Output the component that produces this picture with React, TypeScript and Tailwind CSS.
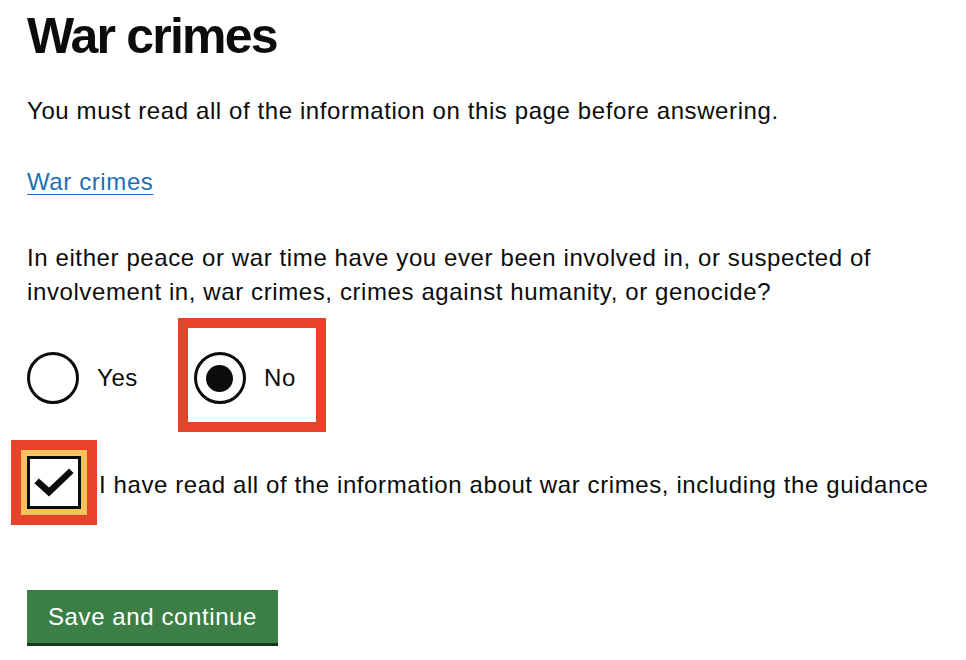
import React, { useState } from 'react';

const App: React.FC = () => {
  const [answer, setAnswer] = useState<'yes' | 'no'>('no');
  const [confirmed, setConfirmed] = useState(true);

  return (
    <div className="min-h-screen bg-white pl-[27px] pt-[6px] text-[#0b0c0c] font-['Liberation_Sans',Arial,sans-serif] tracking-[0.6px]">
      <h1 className="text-[50px] leading-[60px] font-bold tracking-[-1.8px]">War crimes</h1>

      <p className="mt-[28px] text-[24px] leading-[34px]">
        You must read all of the information on this page before answering.
      </p>

      <p className="mt-[37px] text-[24px] leading-[34px]">
        <a href="#" className="text-[#1d70b8] underline decoration-1 underline-offset-[4px]">War crimes</a>
      </p>

      <fieldset className="mt-[42px]">
        <legend className="text-[24px] leading-[34px] max-w-[880px]">
          In either peace or war time have you ever been involved in, or suspected of involvement in, war crimes, crimes against humanity, or genocide?
        </legend>

        <div className="mt-[9px] flex items-start">
          <label className="mt-[34px] flex items-center cursor-pointer" onClick={() => setAnswer('yes')}>
            <span className="w-[52px] h-[52px] rounded-full border-[3px] border-[#0b0c0c] flex items-center justify-center">
              {answer === 'yes' && <span className="w-[27px] h-[27px] rounded-full bg-[#0b0c0c]" />}
            </span>
            <span className="ml-[18px] text-[24px] leading-[34px]">Yes</span>
          </label>

          {/* highlighted answer */}
          <div className="ml-[40px] border-[10px] border-[#e6432a] pt-[24px] pb-[18px] pl-[6px] pr-[20px]">
            <label className="flex items-center cursor-pointer" onClick={() => setAnswer('no')}>
              <span className="w-[52px] h-[52px] rounded-full border-[3px] border-[#0b0c0c] flex items-center justify-center">
                {answer === 'no' && <span className="w-[27px] h-[27px] rounded-full bg-[#0b0c0c]" />}
              </span>
              <span className="ml-[18px] text-[24px] leading-[34px]">No</span>
            </label>
          </div>
        </div>
      </fieldset>

      <div className="mt-[8px] -ml-4 flex items-center">
        <button
          type="button"
          onClick={() => setConfirmed(!confirmed)}
          className="border-[10px] border-[#e6432a]"
        >
          <span className="block border-[6px] border-[#f7c25c]">
            <span className="block w-[54px] h-[53px] border-[3px] border-[#0b0c0c] bg-white">
              {confirmed && (
                <svg width="48" height="47" viewBox="0 0 48 47">
                  <polyline points="9,24 19,33 39,14" fill="none" stroke="#0b0c0c" strokeWidth="6.5" strokeLinecap="square" />
                </svg>
              )}
            </span>
          </span>
        </button>
        <span className="ml-[2px] pt-[5px] text-[24px] leading-[34px]">
          I have read all of the information about war crimes, including the guidance
        </span>
      </div>

      <button
        type="button"
        className="mt-[65px] h-[53px] pl-[21px] pr-[21px] bg-[#3b7f47] text-white text-[24px] leading-[34px] shadow-[0_3px_0_#123a1e]"
      >
        Save and continue
      </button>
    </div>
  );
};

export default App;
